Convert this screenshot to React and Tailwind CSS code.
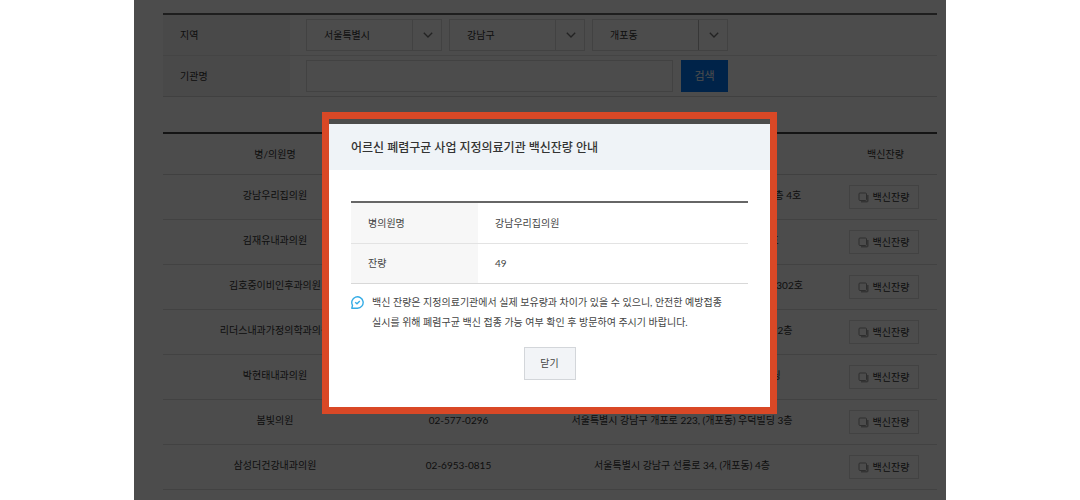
import React from 'react';

const regions = [
  { label: '시도', value: '서울특별시', divider: 'border-[#dcdcdc]' },
  { label: '시군구', value: '강남구', divider: 'border-[#dcdcdc]' },
  { label: '읍면동', value: '개포동', divider: 'border-[#b8b8b8]' },
];

const clinics = [
  { name: '강남우리집의원', phone: '02-571-7582', address: '서울특별시 강남구 개포로 310, (개포동) 주공상가 2층 4호' },
  { name: '김재유내과의원', phone: '02-577-5975', address: '서울특별시 강남구 개포로 264, (개포동) 302호' },
  { name: '김호중이비인후과의원', phone: '02-573-8275', address: '서울특별시 강남구 개포로 516, (개포동) 개포프라자 302호' },
  { name: '리더스내과가정의학과의원', phone: '02-573-7582', address: '서울특별시 강남구 개포로 252, (개포동) 현대빌딩 2층' },
  { name: '박현태내과의원', phone: '02-574-0075', address: '서울특별시 강남구 선릉로 14, (개포동) 삼성빌딩' },
  { name: '봄빛의원', phone: '02-577-0296', address: '서울특별시 강남구 개포로 223, (개포동) 우덕빌딩 3층' },
  { name: '삼성더건강내과의원', phone: '02-6953-0815', address: '서울특별시 강남구 선릉로 34, (개포동) 4층' },
];

function RegionSelect({ label, value, divider }) {
  return (
    <div className="relative w-[136px]">
      <select
        aria-label={label}
        defaultValue={value}
        className="h-8 w-full appearance-none border border-[#dcdcdc] bg-white pl-[17px] text-[#333]"
      >
        <option>{value}</option>
      </select>
      <span className={`pointer-events-none absolute inset-y-px right-0 flex w-[30px] items-center justify-center border-l ${divider}`}>
        <svg viewBox="0 0 10 6" className="h-[6px] w-[10px]" fill="none" stroke="#777" strokeWidth="1.4">
          <path d="M0.8 0.8 L5 4.9 L9.2 0.8" />
        </svg>
      </span>
    </div>
  );
}

function SearchForm() {
  return (
    <form className="border-t-2 border-[#666]" onSubmit={(e) => e.preventDefault()}>
      <div className="flex h-[41px] border-b border-[#e4e4e4]">
        <div className="flex w-[127px] items-center bg-[#f5f5f5] pl-[17px]">지역</div>
        <div className="flex items-center gap-[7px] pl-4">
          {regions.map((r) => (
            <RegionSelect key={r.label} {...r} />
          ))}
        </div>
      </div>
      <div className="flex h-[41px] border-b border-[#d8d8d8]">
        <label htmlFor="clinic" className="flex w-[127px] items-center bg-[#f5f5f5] pl-[17px]">
          기관명
        </label>
        <div className="flex items-center gap-2 pl-4">
          <input id="clinic" type="text" className="h-8 w-[367px] border border-[#dcdcdc] bg-white px-4" />
          <button type="submit" className="h-8 w-[47px] bg-[#0075f5] text-[11px] text-white">
            검색
          </button>
        </div>
      </div>
    </form>
  );
}

function StockButton() {
  return (
    <button type="button" className="inline-flex h-6 w-[70px] items-center justify-center gap-1 border border-[#dcdcdc] align-middle">
      <svg viewBox="0 0 11 11" className="size-[11px]" fill="none" stroke="#999">
        <path d="M3 9.8 H8.8 Q9.8 9.8 9.8 8.8 V3" strokeWidth="1.6" stroke="#b0b0b0" />
        <rect x="1" y="1" width="7.5" height="7.5" rx="1" />
      </svg>
      백신잔량
    </button>
  );
}

function ClinicTable() {
  return (
    <table className="mt-[35px] w-full table-fixed border-separate border-spacing-0 border-t-2 border-[#444] text-center text-[#333]">
      <colgroup>
        <col className="w-[224px]" />
        <col className="w-[143px]" />
        <col />
        <col className="w-[103px]" />
      </colgroup>
      <thead>
        <tr className="h-[41px]">
          {['병/의원명', '전화번호', '주소', '백신잔량'].map((h) => (
            <th key={h} className="border-b border-[#d8d8d8] p-0 font-normal">{h}</th>
          ))}
        </tr>
      </thead>
      <tbody>
        {clinics.map((c) => (
          <tr key={c.name} className="h-[45px]">
            <td className="border-b border-[#dedede] p-0 pb-1">{c.name}</td>
            <td className="border-b border-[#dedede] p-0 pb-1">{c.phone}</td>
            <td className="border-b border-[#dedede] p-0 pb-1">{c.address}</td>
            <td className="border-b border-[#dedede] p-0 pr-1">
              <StockButton />
            </td>
          </tr>
        ))}
      </tbody>
    </table>
  );
}

function StockDialog() {
  return (
    <section role="dialog" aria-labelledby="dialog-title" className="w-[455px] border-[7px] border-[#d94826] bg-white text-[#444]">
      <header className="flex h-[51px] items-center border-t-[5px] border-[#4c4c4c] bg-[#eff3f7] px-[22px] pt-px">
        <h2 id="dialog-title" className="text-[12px] font-medium text-[#333]">
          어르신 폐렴구균 사업 지정의료기관 백신잔량 안내
        </h2>
      </header>
      <div className="px-[22px] pt-[31px] pb-[27px]">
        <table className="w-full table-fixed border-separate border-spacing-0 border-t-2 border-[#666] text-left">
          <tbody>
            <tr className="h-[41px]">
              <th className="w-[127px] border-b border-[#e3e3e3] bg-[#f7f7f7] p-0 pl-[17px] font-normal">병의원명</th>
              <td className="border-b border-[#e3e3e3] p-0 pl-[17px]">강남우리집의원</td>
            </tr>
            <tr className="h-10">
              <th className="border-b border-[#d8d8d8] bg-[#f7f7f7] p-0 pl-[17px] font-normal">잔량</th>
              <td className="border-b border-[#d8d8d8] p-0 pl-[17px]">49</td>
            </tr>
          </tbody>
        </table>
        <div className="mt-2 flex gap-2">
          <svg viewBox="0 0 13 13" className="mt-1 size-[13px] shrink-0" fill="none" stroke="#35ace6" strokeWidth="1.4">
            <path d="M0.8 12.2 L1.5 9.3 A5.7 5.7 0 1 1 6.5 12.2 Z" strokeLinejoin="round" />
            <path d="M4.2 6.2 L6 7.8 L8.8 5.1" />
          </svg>
          <p className="leading-5">
            백신 잔량은 지정의료기관에서 실제 보유량과 차이가 있을 수 있으니, 안전한 예방접종
            <br />
            실시를 위해 폐렴구균 백신 접종 가능 여부 확인 후 방문하여 주시기 바랍니다.
          </p>
        </div>
        <div className="mt-[15px] flex justify-center">
          <button type="button" className="h-[33px] w-[52px] border border-[#d3d6da] bg-[#f2f4f7] text-[#444]">
            닫기
          </button>
        </div>
      </div>
    </section>
  );
}

export default function App() {
  return (
    <div className="min-h-screen bg-white font-['Lato','Noto_Sans_CJK_KR',sans-serif] text-[10px] text-[#333]">
      <main className="relative mx-auto min-h-screen max-w-[812px] pt-[13px] pr-[9px] pl-[29px]">
        <SearchForm />
        <ClinicTable />
        <div className="absolute inset-0 flex items-start justify-center bg-black/70 pt-28 pl-[19px]">
          <StockDialog />
        </div>
      </main>
    </div>
  );
}
